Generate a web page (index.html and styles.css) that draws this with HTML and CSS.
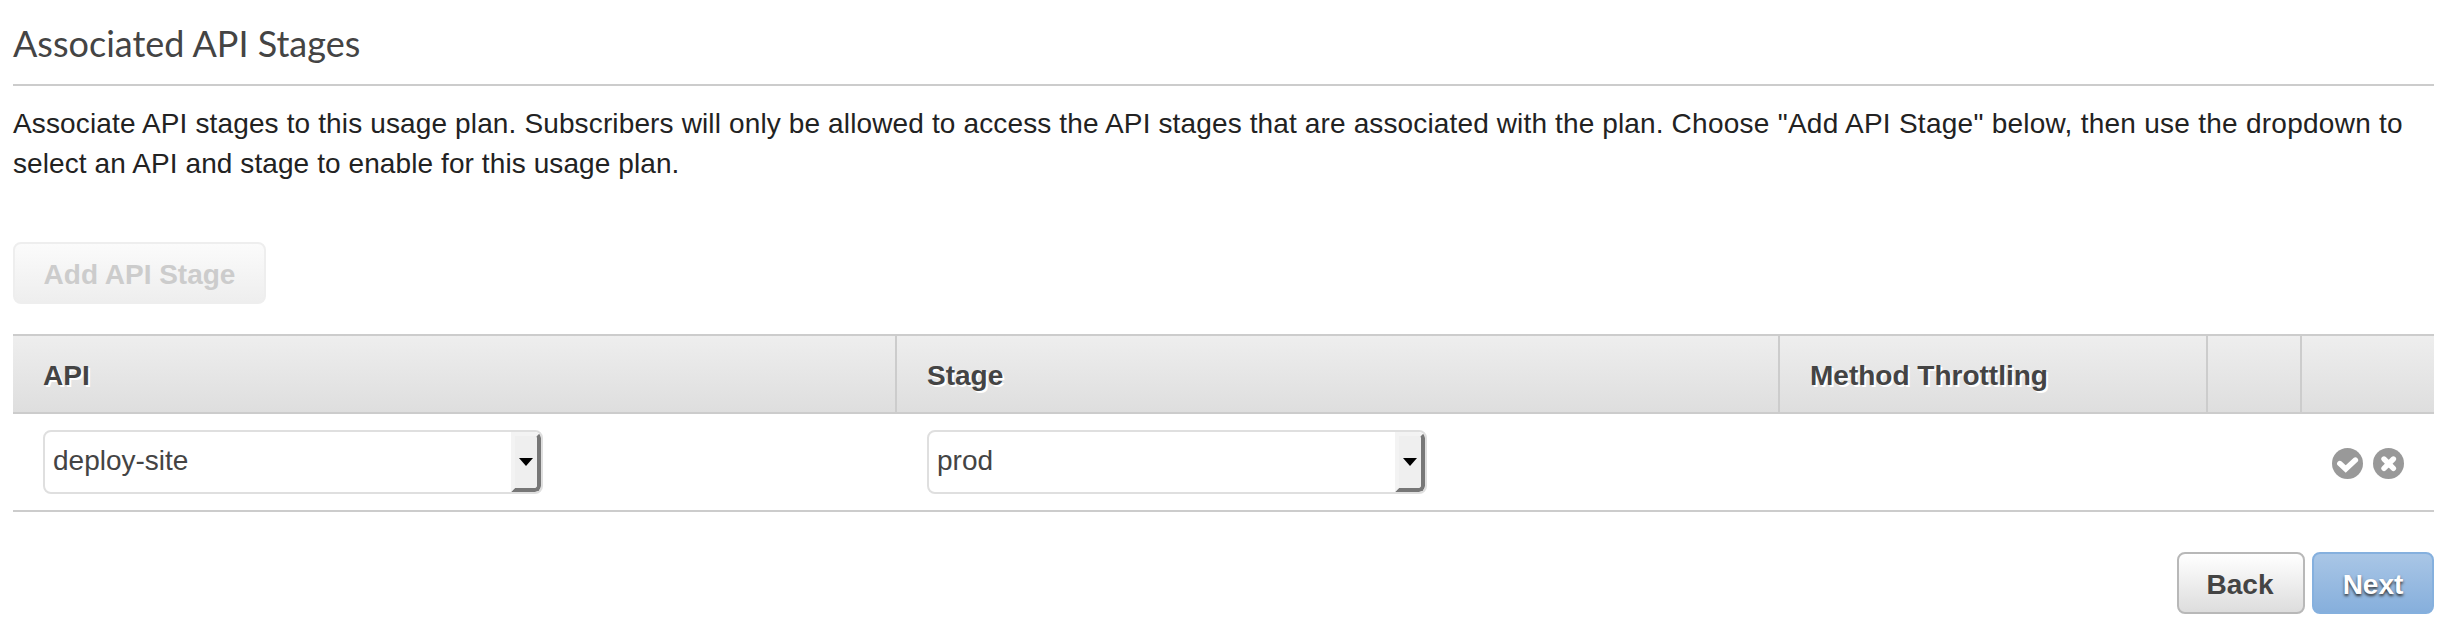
FILE: index.html
```html
<!DOCTYPE html>
<html lang="en">
<head>
<meta charset="utf-8">
<title>Associated API Stages</title>
<link rel="stylesheet" href="styles.css">
</head>
<body>
<main class="panel">
  <h1 class="title">Associated API Stages</h1>
  <p class="intro"><span class="lead">Associate API stages to this usage plan. Subscribers will only be allowed to access the API stages that are associated with the plan. </span><span class="hint">Choose "Add API Stage" below, then use the dropdown to</span><br>select an API and stage to enable for this usage plan.</p>
  <button class="btn btn-add" disabled>Add API Stage</button>
  <section class="table">
    <div class="row head">
      <div class="cell">API</div>
      <div class="cell">Stage</div>
      <div class="cell">Method Throttling</div>
      <div class="cell"></div>
      <div class="cell"></div>
    </div>
    <div class="row body">
      <div class="cell">
        <div class="select"><span class="value">deploy-site</span><span class="toggle"><svg width="14" height="8" viewBox="0 0 14 8"><path d="M0 0H14L7 8Z"/></svg></span></div>
      </div>
      <div class="cell">
        <div class="select"><span class="value">prod</span><span class="toggle"><svg width="14" height="8" viewBox="0 0 14 8"><path d="M0 0H14L7 8Z"/></svg></span></div>
      </div>
      <div class="cell"></div>
      <div class="cell"></div>
      <div class="cell actions">
        <svg class="icon" viewBox="0 0 31 31"><circle cx="15.5" cy="15.5" r="15.5"/><path class="mark" d="M7.8 15.6L13.7 21L23.4 12"/></svg>
        <svg class="icon" viewBox="0 0 31 31"><circle cx="15.5" cy="15.5" r="15.5"/><path class="mark" d="M11 11L20.4 20.4M20.4 11L11 20.4"/></svg>
      </div>
    </div>
  </section>
  <footer class="footer">
    <button class="btn btn-back">Back</button>
    <button class="btn btn-next">Next</button>
  </footer>
</main>
</body>
</html>
```

FILE: styles.css
```css
* { box-sizing: border-box; }

body {
  margin: 0;
  background: #fff;
  color: #222;
  font-family: "Liberation Sans", Arial, sans-serif;
  font-size: 28px;
}

.panel {
  display: flex;
  flex-direction: column;
  align-items: stretch;
  padding: 0 12px 0 13px;
}

.title {
  height: 86px;
  margin: 0;
  padding-top: 21px;
  border-bottom: 2px solid #ccc;
  color: #444;
  font: 400 36px/44px Lato, sans-serif;
}

.intro {
  margin: 18px 0 0;
  line-height: 40px;
  letter-spacing: 0.09px;
  white-space: nowrap;
}

.lead { letter-spacing: 0.135px; }
.hint { letter-spacing: 0.26px; }

.btn {
  height: 62px;
  padding: 4px 0 0;
  border: 2px solid;
  border-radius: 8px;
  font: 700 28px/54px "Liberation Sans", Arial, sans-serif;
  text-align: center;
}

.btn-add {
  width: 253px;
  margin-top: 58px;
  border-color: #eee;
  background: linear-gradient(#fbfbfb, #eee);
  color: #ccc;
}

.table { margin-top: 30px; }

.row {
  display: grid;
  grid-template-columns: 884px 883px 428px 94px 1fr;
  border-bottom: 2px solid #ccc;
}

.head {
  height: 80px;
  border-top: 2px solid #ccc;
  background: linear-gradient(#eee, #dedede);
  color: #444;
  font-weight: 700;
  line-height: 73px;
  text-shadow: 2px 2px 0 #fff;
}

.cell { padding-left: 30px; }
.head .cell { height: 76px; padding-top: 3px; border-right: 2px solid #ccc; }
.head .cell:last-child { border-right: 0; }

.body { height: 98px; }
.body .cell { padding-top: 16px; }

.select {
  display: flex;
  justify-content: space-between;
  width: 500px;
  height: 64px;
  overflow: hidden;
  border: 2px solid #dfdfdf;
  border-radius: 8px;
  color: #444;
}

.value { padding-left: 8px; line-height: 58px; }

.toggle {
  display: flex;
  align-items: center;
  justify-content: center;
  width: 30px;
  border: 4px solid;
  border-color: #f3f3f3 #777 #777 #f3f3f3;
  border-radius: 0 6px 6px 0;
  background: #efefef;
}

.body .actions {
  display: flex;
  justify-content: flex-end;
  gap: 10px;
  padding: 33.5px 30px 0 0;
}

.icon { width: 31px; height: 31px; fill: #999; }
.mark { fill: none; stroke: #fff; stroke-width: 5.4; stroke-linecap: round; }

.footer {
  display: flex;
  justify-content: flex-end;
  gap: 7px;
  margin-top: 40px;
}

.btn-back {
  width: 128px;
  padding-right: 2px;
  border-color: #b8b8b8;
  background: linear-gradient(#fff, #ddd);
  color: #444;
}

.btn-next {
  width: 122px;
  border-color: #85b0de;
  background: linear-gradient(#a9c6e6, #86afdc);
  color: #fff;
  text-shadow: 0 2px 3px #333;
}
```
